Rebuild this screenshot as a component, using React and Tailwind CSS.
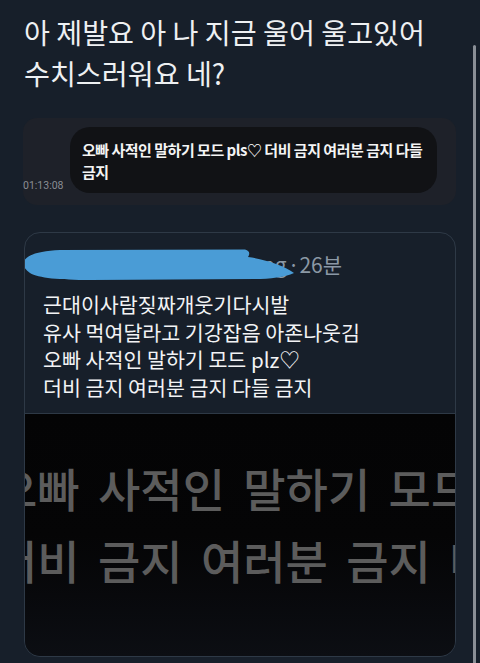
export default function App() {
  const ko = { fontFamily: '"Noto Sans CJK KR", "Noto Sans", sans-serif' };
  return (
    <div className="relative w-[480px] h-[663px] overflow-hidden bg-[#171f2a]" style={ko}>
      <div className="px-6">
        <h1 className="pt-[11px] text-[28.2px] leading-[41px] font-normal text-[#eef0f2]">
          아 제발요 아 나 지금 울어 울고있어
          <br />
          수치스러워요 네?
        </h1>

        <div className="mt-[25px] -ml-px flex h-[87px] rounded-[14px] bg-[#1e2129] pt-[9px] pb-[12px] pr-[19px]">
          <div className="w-[47px] self-end text-[10.5px] leading-[14px] text-[#8a8d93]" style={{ fontFamily: 'Roboto, sans-serif' }}>
            01:13:08
          </div>
          <div className="flex-1 rounded-[20px] bg-[#111215] px-3 pt-3 pb-[10px] text-[15px] leading-[22px] font-semibold tracking-[-0.5px] text-[#f4f4f4] whitespace-nowrap">
            오빠 사적인 말하기 모드 pls♡ 더비 금지 여러분 금지 다들
            <br />
            금지
          </div>
        </div>

        <div className="relative mt-[27px] overflow-hidden rounded-[16px] border border-[#2e3946]">
          <svg
            className="absolute left-[-2px] top-[16px] z-10"
            width="275"
            height="32"
            viewBox="23 249 275 32"
          >
            <path
              d="M23,262 C28,254 40,251 60,250 L245,249.5 C250,251 250,254 248,257 C265,259 285,266 294,273 C285,277 270,279 255,279 L90,280 C60,280 38,278 30,273 C25,269 22,265 23,262 Z"
              fill="#4a9cd6"
            />
          </svg>
          <div className="px-[18px] pt-[19px] pb-[11px]">
            <div className="flex items-center h-[26px] text-[21px] text-[#8b98a5] whitespace-nowrap">
              <div className="ml-[2px] h-[26px] w-[26px] shrink-0 rounded-full bg-[#8a5a3c]" />
              <span className="ml-[191px]">ng</span>
              <span className="ml-[1px]">·26분</span>
            </div>
            <div className="mt-[13px] text-[20.6px] leading-[27.7px] text-[#f2f3f5] whitespace-nowrap">
              근대이사람짖짜개웃기다시발
              <br />
              유사 먹여달라고 기강잡음 아존나웃김
              <br />
              오빠 사적인 말하기 모드 plz♡
              <br />
              더비 금지 여러분 금지 다들 금지
            </div>
          </div>
          <div className="h-[243px] border-t border-[#2e3946] bg-linear-to-b from-[#040405] via-[#050506] to-[#0c0e13] pt-[37px] overflow-hidden whitespace-nowrap">
            <div className="-ml-[30px] text-[46px] leading-[72px] font-medium text-[#5c5c5c] [word-spacing:8px]">
              오빠 사적인 말하기 모드 pls♡
              <br />
              더비 금지 여러분 금지 다들 금지
            </div>
          </div>
        </div>
      </div>
      <div className="absolute right-[4px] top-[45px] bottom-0 w-[3px] rounded-t-full bg-[#8a8f96]" />
    </div>
  );
}
